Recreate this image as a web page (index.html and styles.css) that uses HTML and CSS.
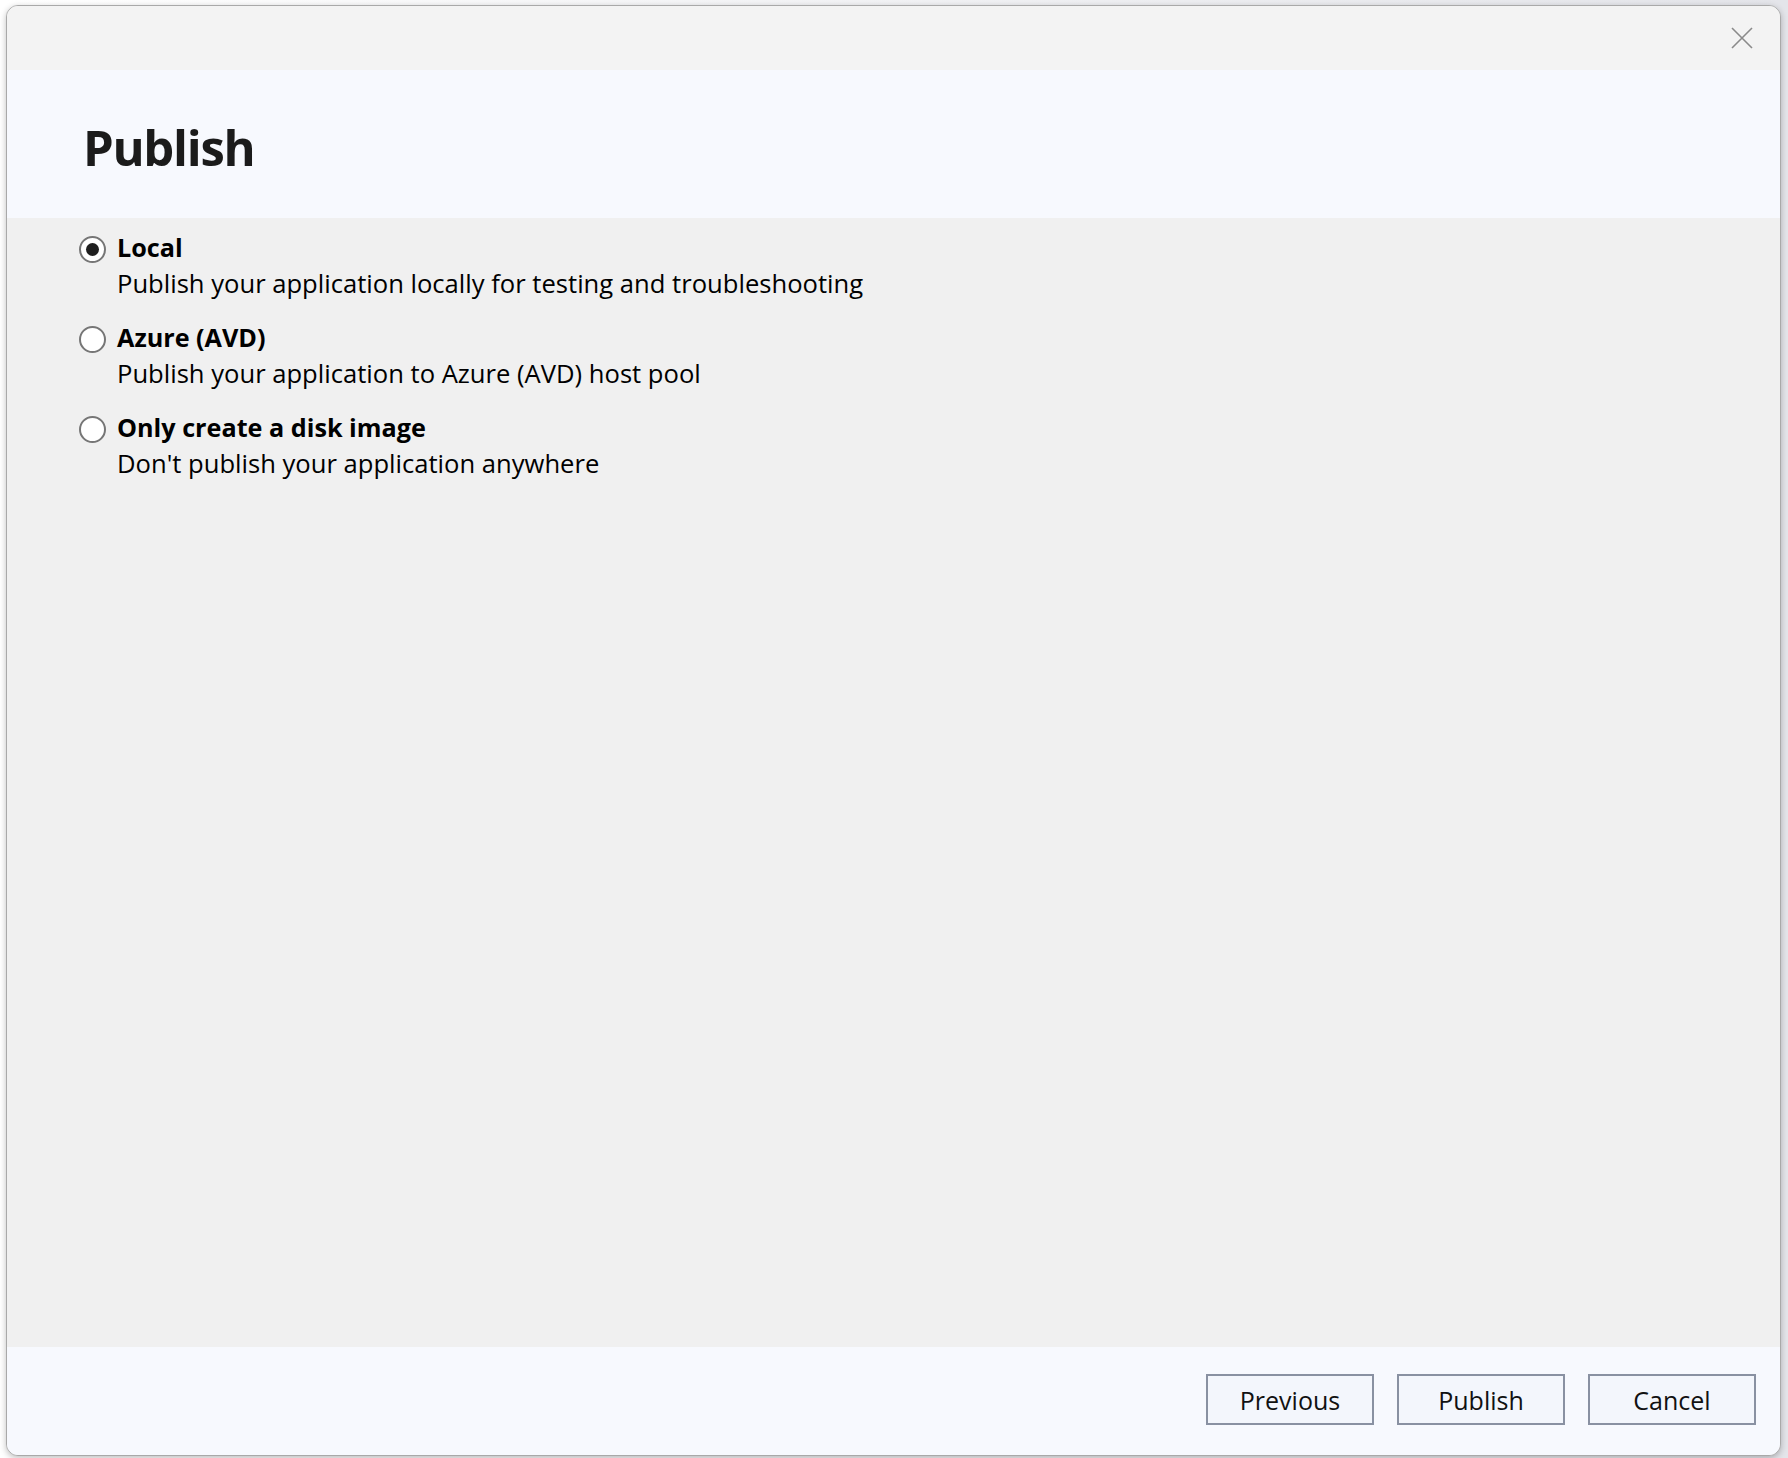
FILE: index.html
```html
<!DOCTYPE html>
<html lang="en">
<head>
<meta charset="utf-8">
<title>Publish</title>
<link rel="stylesheet" href="styles.css">
</head>
<body>
<div class="desktop">
  <div class="dialog">
    <div class="titlebar">
      <button class="close" aria-label="Close">
        <svg width="22" height="22" viewBox="0 0 22 22"><path d="M1 1 L21 21 M21 1 L1 21" stroke="#8a8a8a" stroke-width="1.6" fill="none"/></svg>
      </button>
    </div>
    <div class="header">
      <h1 class="title">Publish</h1>
    </div>
    <div class="content">
      <label class="option">
        <span class="radio checked"></span>
        <span class="text">
          <span class="label">Local</span>
          <span class="desc">Publish your application locally for testing and troubleshooting</span>
        </span>
      </label>
      <label class="option">
        <span class="radio"></span>
        <span class="text">
          <span class="label">Azure (AVD)</span>
          <span class="desc">Publish your application to Azure (AVD) host pool</span>
        </span>
      </label>
      <label class="option">
        <span class="radio"></span>
        <span class="text">
          <span class="label">Only create a disk image</span>
          <span class="desc">Don't publish your application anywhere</span>
        </span>
      </label>
    </div>
    <div class="footer">
      <button class="btn">Previous</button>
      <button class="btn">Publish</button>
      <button class="btn">Cancel</button>
    </div>
  </div>
</div>
</body>
</html>
```
FILE: styles.css
```css
html, body {
  margin: 0;
  padding: 0;
  width: 1788px;
  height: 1458px;
  overflow: hidden;
}
body {
  background: #f4f4f6;
  font-family: "Open Sans", "Noto Sans", sans-serif;
  color: #000;
}
.desktop {
  width: 1788px;
  height: 1458px;
  padding: 5px 0 0 6px;
  box-sizing: border-box;
  background: linear-gradient(to right, #ffffff 0, #ffffff 6px, #e4e5ea 1781px);
}
.dialog {
  width: 1775px;
  height: 1451px;
  box-sizing: border-box;
  border: 1px solid #a9a9a9;
  border-radius: 12px;
  overflow: hidden;
  display: flex;
  flex-direction: column;
  background: #f0f0f0;
  box-shadow: 0 2px 6px rgba(0,0,0,0.25);
}
.titlebar {
  height: 64px;
  flex: none;
  background: #f3f3f3;
  display: flex;
  justify-content: flex-end;
  align-items: center;
  padding-right: 27px;
}
.close {
  border: 0;
  background: transparent;
  padding: 0;
  width: 22px;
  height: 22px;
  display: flex;
}
.header {
  height: 148px;
  flex: none;
  background: #f7f9fe;
  box-sizing: border-box;
  padding: 44px 0 0 76px;
}
.title {
  margin: 0;
  font-size: 49px;
  letter-spacing: -1.3px;
  font-weight: 700;
  line-height: 66px;
  color: #1b1b1b;
}
.content {
  flex: 1;
  background: #f0f0f0;
  padding: 17px 0 0 72px;
  display: flex;
  flex-direction: column;
  gap: 23px;
}
.option {
  display: flex;
  align-items: flex-start;
  gap: 11px;
}
.radio {
  width: 27px;
  height: 27px;
  box-sizing: border-box;
  border: 2px solid #767676;
  border-radius: 50%;
  background: #ffffff;
  margin-top: 1px;
  flex: none;
  display: flex;
  align-items: center;
  justify-content: center;
}
.radio.checked::after {
  content: "";
  width: 13px;
  height: 13px;
  border-radius: 50%;
  background: #1f1f1f;
}
.text {
  display: flex;
  flex-direction: column;
}
.label {
  font-weight: 700;
  font-size: 25.2px;
  line-height: 36px;
  margin-top: -6px;
}
.desc {
  font-size: 25.6px;
  line-height: 36px;
  margin-top: 1px;
}
.footer {
  height: 108px;
  flex: none;
  background: #f7f9fe;
  display: flex;
  justify-content: flex-end;
  align-items: flex-start;
  box-sizing: border-box;
  padding: 27px 24px 0 0;
  gap: 23px;
}
.btn {
  width: 168px;
  height: 51px;
  box-sizing: border-box;
  border: 2px solid #8991a2;
  background: #f3f6fc;
  font-family: "Open Sans", "Noto Sans", sans-serif;
  font-size: 25px;
  color: #111;
  padding: 0;
}
```
